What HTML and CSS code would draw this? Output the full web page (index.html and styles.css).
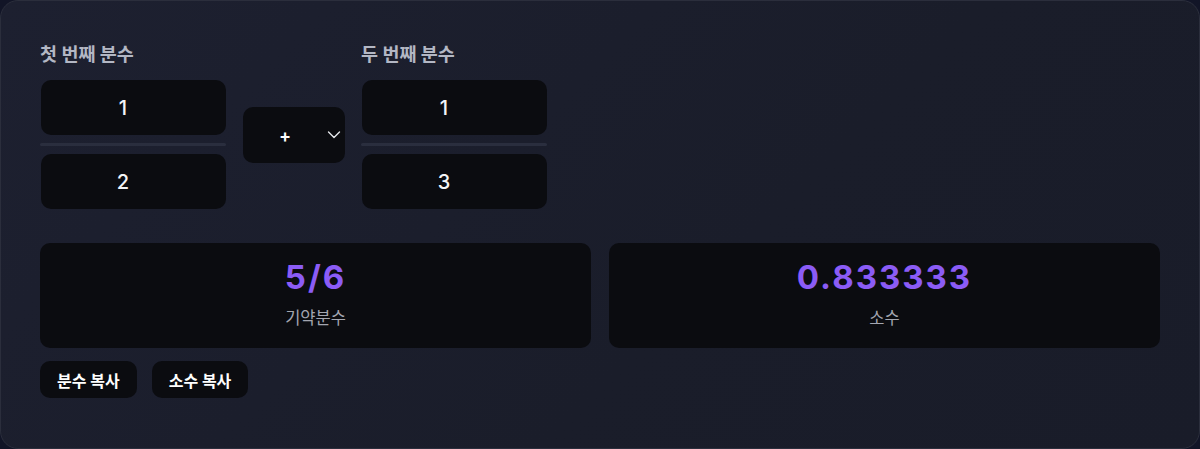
FILE: index.html
```html
<!DOCTYPE html>
<html lang="ko">
<head>
    <meta charset="UTF-8">
    <meta name="viewport" content="width=device-width, initial-scale=1.0">
    <title>분수 계산기</title>
    <link rel="stylesheet" href="styles.css">
</head>
<body>
    <div class="card">
        <div class="inputs-row">
            <div class="fraction">
                <div class="frac-label">첫 번째 분수</div>
                <div class="frac-stack">
                    <div class="num-box">1</div>
                    <div class="frac-line"></div>
                    <div class="num-box">2</div>
                </div>
            </div>
            <div class="op-select">
                <span class="op-sign">+</span>
                <svg class="chevron" width="14" height="10" viewBox="0 0 14 10" fill="none"><path d="M1.5 2l5.5 5.5 5.5-5.5" stroke="#e5e7eb" stroke-width="1.4" stroke-linecap="round" stroke-linejoin="round"/></svg>
            </div>
            <div class="fraction">
                <div class="frac-label">두 번째 분수</div>
                <div class="frac-stack">
                    <div class="num-box">1</div>
                    <div class="frac-line"></div>
                    <div class="num-box">3</div>
                </div>
            </div>
        </div>

        <div class="results">
            <div class="result-box">
                <div class="result-value">5/6</div>
                <div class="result-label">기약분수</div>
            </div>
            <div class="result-box">
                <div class="result-value">0.833333</div>
                <div class="result-label">소수</div>
            </div>
        </div>

        <div class="actions">
            <button class="copy-btn">분수 복사</button>
            <button class="copy-btn">소수 복사</button>
        </div>
    </div>
</body>
</html>
```

FILE: styles.css
```css
* { box-sizing: border-box; }
body { margin: 0; background: #121527; font-family: "Inter", "Noto Sans CJK KR", sans-serif; color: #fff; height: 449px; overflow: hidden; }
.card { height: 449px; width: 1200px; border: 1px solid #2b2e3c; border-radius: 18px; background: linear-gradient(135deg, #1d2030 0%, #1a1d2a 60%, #191c29 100%); padding: 41px 39px 0 39px; }
.inputs-row { display: flex; align-items: flex-start; gap: 16px; }
.fraction { width: 186px; display: flex; flex-direction: column; }
.frac-label { font-size: 18.5px; font-weight: 700; line-height: 24px; color: #b3b7c4; margin-bottom: 14px; }
.frac-stack { display: flex; flex-direction: column; gap: 8px; }
.num-box { height: 55px; margin-left: 1px; padding-right: 21px; background: #0b0c10; border-radius: 10px; display: flex; align-items: center; justify-content: center; font-size: 20px; font-weight: 500; color: #f3f4f6; }
.frac-line { height: 3px; background: #2a2e3e; border-radius: 2px; }
.op-select { width: 102px; height: 56px; margin-top: 65px; margin-left: 1px; background: #0b0c10; border-radius: 10px; display: flex; align-items: center; padding: 0 4px 0 36px; }
.op-sign { font-size: 18px; font-weight: 600; flex: 1; }
.chevron { display: block; }
.results { display: flex; gap: 18px; margin-top: 34px; }
.result-box { flex: 1; height: 105px; background: #0b0c10; border-radius: 10px; padding: 16px 16px 0; display: flex; flex-direction: column; align-items: center; }
.result-value { font-size: 33px; font-weight: 700; line-height: 36px; letter-spacing: 2px; color: #8b5cf6; }
.result-label { font-size: 16.5px; line-height: 22px; color: #a3a6b0; margin-top: 12px; }
.actions { display: flex; gap: 15px; margin-top: 13px; }
.copy-btn { height: 37px; padding: 0 17px; background: #0b0c10; border: none; border-radius: 10px; color: #fff; font-family: inherit; font-size: 16px; font-weight: 700; cursor: pointer; }
```
